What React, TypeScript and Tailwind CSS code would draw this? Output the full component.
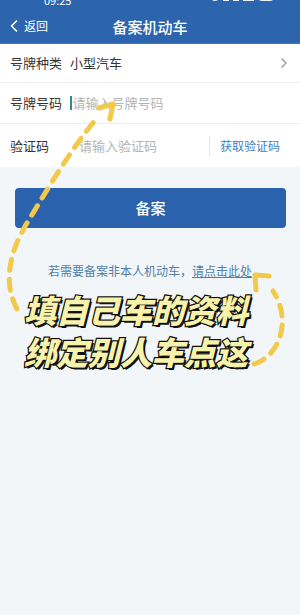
import { ChevronLeft, ChevronRight } from "lucide-react";

const font = { fontFamily: '"Noto Sans CJK SC", "Noto Sans", sans-serif' };

const DashedArrows = () => (
  <svg className="absolute inset-0 pointer-events-none" width="300" height="615" viewBox="0 0 300 615">
    <g fill="none" stroke="#f2c94a" strokeWidth="5" strokeLinecap="round">
      <path d="M17 309 C3 283 9 253 27 223 C44 195 70 150 97 118" strokeDasharray="11 9" />
      <path d="M99 108 L113 104 L110 119" strokeLinejoin="round" />
      <path d="M254 364 C280 356 292 320 273 291" strokeDasharray="11 9" />
      <path d="M256 290 L255 275 L269 276" strokeLinejoin="round" />
    </g>
  </svg>
);

export default function App() {
  return (
    <div className="relative w-[300px] h-[615px] overflow-hidden bg-[#f3f6f8]" style={font}>
      {/* header */}
      <div className="relative h-[44px] bg-[#2c64ad] border-b border-[#3f78bf] flex items-center px-2 text-white">
        <div className="absolute -top-[5px] left-[44px] text-[11px] leading-none">09:25</div>
        <div className="absolute -top-[3px] right-[26px] flex items-center gap-1 opacity-90">
          <span className="w-[8px] h-[4px] rounded-b-full bg-white" />
          <span className="w-[6px] h-[4px] bg-white" />
          <span className="w-[6px] h-[4px] bg-white" />
          <span className="w-[11px] h-[4px] bg-white" />
          <span className="w-[16px] h-[4px] rounded-b-sm bg-white" />
        </div>
        <ChevronLeft size={20} strokeWidth={2} className="-ml-1 mt-2" />
        <span className="text-[12px] mt-2">返回</span>
        <span className="absolute left-0 right-0 top-[19px] text-center text-[15px] font-medium leading-none">备案机动车</span>
      </div>

      {/* form */}
      <div className="bg-white text-[13px] text-[#333]">
        <div className="h-[39px] flex items-center pl-2.5 pr-2 border-b border-[#ececec]">
          <span className="w-[60px]">号牌种类</span>
          <span className="flex-1">小型汽车</span>
          <ChevronRight size={16} className="text-[#999]" />
        </div>
        <div className="h-[41px] flex items-center pl-2.5 pr-2 border-b border-[#ececec]">
          <span className="w-[60px]">号牌号码</span>
          <span className="w-[1.5px] h-[14px] bg-[#2a8c9a] mr-[1px]" />
          <span className="text-[#b4b4b4]">请输入号牌号码</span>
        </div>
        <div className="h-[43px] flex items-center pl-2.5 pr-2">
          <span className="w-[69px]">验证码</span>
          <span className="flex-1 text-[#b4b4b4]">请输入验证码</span>
          <span className="w-px h-[20px] bg-[#e4e4e4] mr-[10px]" />
          <span className="text-[12px] text-[#3f80c0] mr-[12px]">获取验证码</span>
        </div>
      </div>

      {/* button */}
      <div className="pl-[15px] pr-[14px] mt-[21px]">
        <div className="h-[40px] rounded-[4px] bg-[#2a62ad] flex items-center justify-center text-white text-[15px] font-medium">
          备案
        </div>
      </div>

      <div className="mt-[34px] text-center text-[12px] text-[#4f7fa9]">
        若需要备案非本人机动车，<span className="underline">请点击此处</span>
      </div>

      {/* overlay caption */}
      <div className="absolute left-[24px] top-[288px] text-[32px] leading-[42px] font-black italic text-[#f8f3ac] [-webkit-text-stroke:2.5px_#111] [paint-order:stroke_fill] [text-shadow:2px_2px_0_#111]">
        <div>填自己车的资料</div>
        <div>绑定别人车点这</div>
      </div>

      <DashedArrows />
    </div>
  );
}
